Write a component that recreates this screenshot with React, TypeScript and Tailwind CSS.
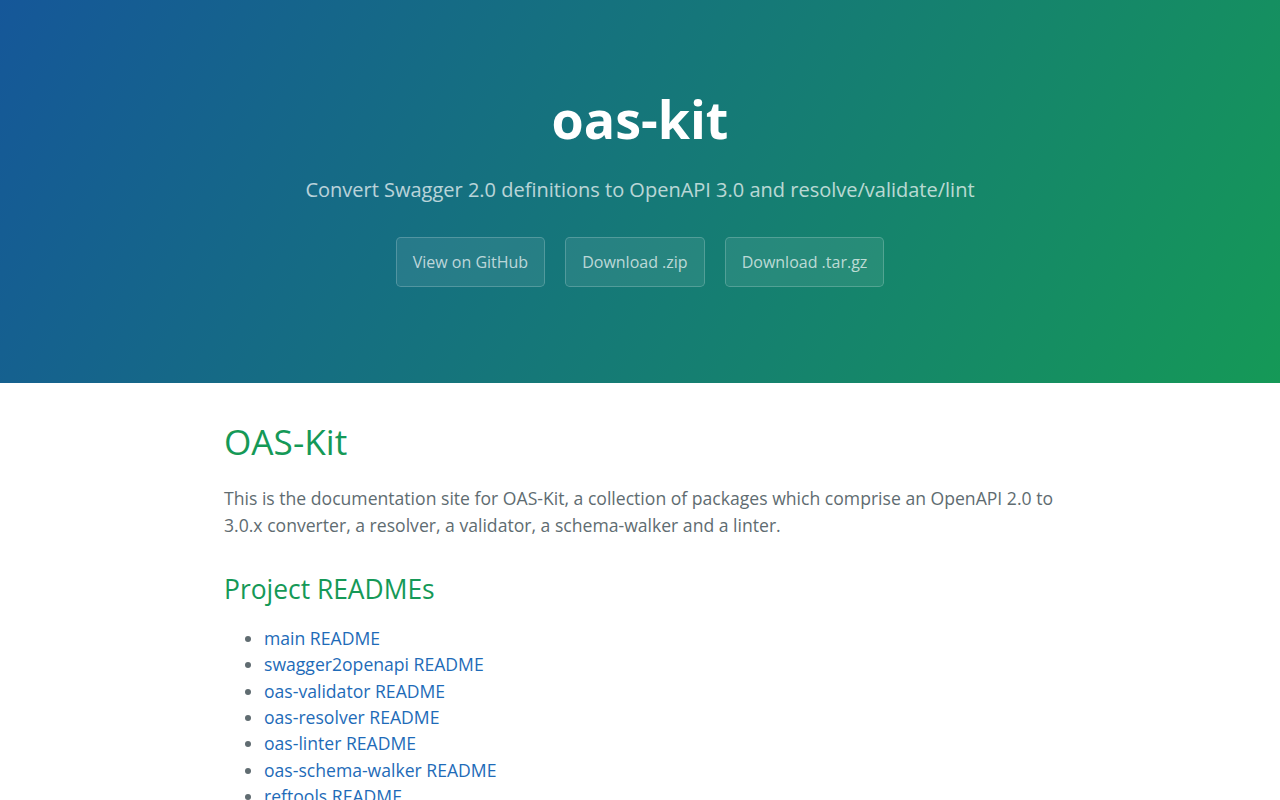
import React from 'react';

const readmes = [
  'main README',
  'swagger2openapi README',
  'oas-validator README',
  'oas-resolver README',
  'oas-linter README',
  'oas-schema-walker README',
  'reftools README',
];

const buttons = ['View on GitHub', 'Download .zip', 'Download .tar.gz'];

export default function App() {
  return (
    <div className="min-h-screen bg-white font-['Open_Sans',sans-serif] text-[16px] leading-normal text-[#606c71]">
      {/* Header */}
      <section className="bg-[linear-gradient(120deg,#155799,#159957)] px-24 pt-20 pb-20 text-center text-white">
        <h1 className="mb-[1.6px] text-[52px] font-bold leading-[1.5]">oas-kit</h1>
        <h2 className="mt-[16.6px] mb-8 text-[20px] font-normal leading-[1.5] opacity-70">
          Convert Swagger 2.0 definitions to OpenAPI 3.0 and resolve/validate/lint
        </h2>
        <div className="flex justify-center gap-5">
          {buttons.map((label) => (
            <a
              key={label}
              href="#"
              className="mb-4 rounded-[0.3rem] border border-white/20 bg-white/[0.08] px-4 py-3 text-[16px] leading-6 text-white/70"
            >
              {label}
            </a>
          ))}
        </div>
      </section>

      {/* Main content */}
      <section className="mx-auto max-w-[64rem] px-24 py-8 text-[17.6px] leading-[1.5]">
        <h1 className="mb-[18px] text-[35.2px] font-normal leading-[1.5] text-[#159957]">OAS-Kit</h1>
        <p className="mb-4">
          This is the documentation site for OAS-Kit, a collection of packages which comprise an OpenAPI 2.0 to
          3.0.x converter, a resolver, a validator, a schema-walker and a linter.
        </p>
        <h2 className="mt-8 mb-[15px] text-[26.4px] font-normal leading-[1.5] text-[#159957]">Project READMEs</h2>
        <ul className="list-disc pl-10">
          {readmes.map((r) => (
            <li key={r}>
              <a href="#" className="text-[#1e6bb8]">
                {r}
              </a>
            </li>
          ))}
        </ul>
      </section>
    </div>
  );
}
